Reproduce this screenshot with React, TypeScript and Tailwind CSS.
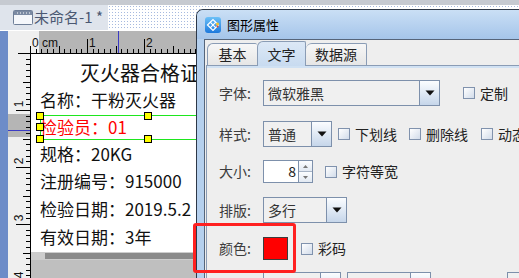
import React from "react";

const FONT = "font-['Noto_Sans_CJK_SC','Noto_Sans',sans-serif]";

const TopRuler = () => {
  const ticks = [];
  for (let i = 0; i <= 30; i++) {
    const x = Math.round(22 + i * 5.7) + 0.5;
    const len = i === 0 ? 7 : i % 10 === 0 ? 14 : i % 5 === 0 ? 7 : 4;
    ticks.push(<line key={i} x1={x} x2={x} y1={22 - len} y2={22} stroke="#000" strokeWidth={1} />);
  }
  return (
    <svg width="200" height="23" className="block">
      <rect x="0" y="0" width="31" height="23" fill="#efefef" />
      <rect x="31" y="0" width="169" height="22" fill="#b5b5b5" />
      <line x1="10" x2="200" y1="22.5" y2="22.5" stroke="#000" />
      {ticks}
      <line x1="110.5" x2="110.5" y1="0" y2="22" stroke="#3b3bc4" />
      <g fontFamily="'Liberation Sans', sans-serif" fontSize="12" fill="#111">
        <text x="24" y="16">0 cm</text>
        <text x="81" y="16">1</text>
        <text x="138" y="16">2</text>
      </g>
    </svg>
  );
};

const LeftRuler = () => {
  const ticks = [];
  for (let i = 0; i <= 40; i++) {
    const y = Math.round(-1 + i * 5.7) + 0.5;
    const len = i % 10 === 0 ? 14 : i % 5 === 0 ? 7 : 4;
    ticks.push(<line key={i} x1={22 - len} x2={22} y1={y} y2={y} stroke="#000" strokeWidth={1} />);
  }
  const labels = [
    { t: "1", y: 47 },
    { t: "2", y: 104 },
    { t: "3", y: 161 },
    { t: "4", y: 218 },
  ];
  return (
    <svg width="22" height="224" className="block shrink-0">
      <rect x="0" y="0" width="22" height="224" fill="#efefef" />
      <rect x="0" y="60" width="22" height="23" fill="#b5b5b5" />
      <line x1="0" x2="22" y1="76.5" y2="76.5" stroke="#3b3bc4" />
      {ticks}
      <g fontFamily="'Liberation Sans', sans-serif" fontSize="12" fill="#111">
        {labels.map((l) => (
          <text key={l.t} x="0" y="0" transform={`translate(15 ${l.y + 3}) rotate(-90)`} textAnchor="middle">
            {l.t}
          </text>
        ))}
      </g>
    </svg>
  );
};

const WindowIcon = () => (
  <svg width="20" height="15" viewBox="0 0 20 15">
    <rect x="0.5" y="0.5" width="19" height="14" rx="1" fill="#f5f7fb" stroke="#6f7f98" />
    <rect x="1" y="1" width="18" height="4" fill="#7b8aa3" />
    <g fill="#fff">
      <rect x="4" y="2.5" width="1" height="1" />
      <rect x="7" y="2.5" width="1" height="1" />
      <rect x="10" y="2.5" width="1" height="1" />
      <rect x="13" y="2.5" width="1" height="1" />
      <rect x="16" y="2.5" width="1" height="1" />
    </g>
  </svg>
);

const DialogIcon = () => (
  <svg width="16" height="16" viewBox="0 0 16 16">
    <defs>
      <linearGradient id="dg" x1="0" y1="0" x2="0" y2="1">
        <stop offset="0" stopColor="#6cc0f7" />
        <stop offset="1" stopColor="#1c78dc" />
      </linearGradient>
    </defs>
    <rect width="16" height="16" rx="3" fill="url(#dg)" />
    <g stroke="#fff" strokeWidth="1.2" fill="none">
      <path d="M2.5 8 L8 2.5 L13.5 8 L8 13.5 Z" />
      <path d="M5.2 5.2 L10.8 10.8 M10.8 5.2 L5.2 10.8" />
    </g>
    <circle cx="12.5" cy="7" r="1.6" fill="#f2c230" />
    <circle cx="12.5" cy="9.5" r="1" fill="#e2463a" />
  </svg>
);

const Arrow = () => (
  <svg width="10" height="6" viewBox="0 0 10 6">
    <polygon points="0.5,0.5 9.5,0.5 5,5.5" fill="#111" />
  </svg>
);

const Combo = ({ text, width }: { text: string; width: string }) => (
  <div className={`flex h-[26px] border border-[#7d90ab] bg-[#f0f0f0] ${width}`}>
    <span className="flex-1 flex items-center pl-[4px] text-[14px] text-[#333]">{text}</span>
    <span className="w-[20px] border-l border-[#7d90ab] bg-gradient-to-b from-[#fbfdff] to-[#c6d6ea] flex items-center justify-center">
      <Arrow />
    </span>
  </div>
);

const Check = ({ label }: { label: string }) => (
  <div className="flex items-center gap-[5px] shrink-0">
    <span className="w-[12px] h-[12px] border border-[#8092ad] bg-gradient-to-br from-white to-[#d2dcea]" />
    <span className="text-[14px] text-[#222] whitespace-nowrap">{label}</span>
  </div>
);

const Label = ({ text }: { text: string }) => (
  <span className="w-[44px] shrink-0 text-[14px] text-[#3c3c3c]">{text}</span>
);

const canvasRows = [
  { text: "名称：干粉灭火器", h: "h-[27px]" },
  { text: "检验员：01", h: "h-[27px]", selected: true },
  { text: "规格：20KG", h: "h-[27px]" },
  { text: "注册编号：915000", h: "h-[28px]" },
  { text: "检验日期：2019.5.2", h: "h-[28px]" },
  { text: "有效日期：3年", h: "h-[27px]" },
];

const Handle = ({ cls }: { cls: string }) => (
  <span className={`absolute w-[8px] h-[8px] bg-[#ffff00] border border-black ${cls}`} />
);

export default function App() {
  return (
    <div className={`relative w-[519px] h-[278px] overflow-hidden bg-[#bfbfbf] ${FONT}`}>
      {/* editor window */}
      <div className="flex flex-col h-full">
        <div className="h-[5px] bg-[#c6cad1]" />
        <div className="h-[25px] flex items-center bg-[#dfe4ec]">
          <span className="ml-[13px] mr-[1px] flex">
            <WindowIcon />
          </span>
          <span className="text-[15px] text-[#4b5872] whitespace-nowrap">未命名-1 *</span>
          <div className="ml-[5px] flex-1 h-full bg-white bg-[radial-gradient(#a7badf_0.8px,transparent_1px)] bg-[length:3px_3px]" />
        </div>
        <div className="h-[1px] bg-white" />
        <div className="flex flex-1">
          <div className="w-[8px] bg-[#6d8cc8]" />
          <div className="flex flex-col flex-1">
            <TopRuler />
            <div className="flex flex-1">
              <LeftRuler />
              <div className="flex flex-col flex-1">
                <div className="relative h-[198px] bg-white border-l border-black pl-[9px]">
                  <div className="mt-[5px] h-[27px] flex items-center pl-[40px] text-[20px] text-[#111] whitespace-nowrap">
                    灭火器合格证
                  </div>
                  {canvasRows.map((r) => (
                    <div
                      key={r.text}
                      className={`${r.h} flex items-center text-[17px] whitespace-nowrap ${
                        r.selected ? "text-[#ff0000]" : "text-[#111]"
                      }`}
                    >
                      {r.text}
                    </div>
                  ))}
                  {/* selection */}
                  <span className="absolute left-[13px] right-0 top-[61px] h-[1px] bg-[#1ee61e]" />
                  <span className="absolute left-[13px] right-0 top-[85px] h-[1px] bg-[#1ee61e]" />
                  <span className="absolute left-[9px] top-[65px] w-[1px] h-[17px] bg-[#1ee61e]" />
                  <Handle cls="left-[5px] top-[58px]" />
                  <Handle cls="left-[5px] top-[69px]" />
                  <Handle cls="left-[5px] top-[81px]" />
                  <Handle cls="left-[113px] top-[58px]" />
                  <Handle cls="left-[113px] top-[81px]" />
                </div>
                <div className="h-[8px] bg-[#cdcdcd] border-l border-black pl-[14px] pt-[1px]">
                  <div className="h-[6px] bg-[#8a8a8a]" />
                </div>
                <div className="flex-1 border-l border-black bg-[#bfbfbf]" />
              </div>
            </div>
          </div>
        </div>
      </div>

      {/* dialog */}
      <div className="absolute left-[196px] top-[9px] w-[330px] h-[275px] rounded-tl-[7px] border-l border-t border-[#2d3848] bg-[#b5d0ee] overflow-hidden">
        <div className="h-[29px] flex items-center pl-[8px] gap-[6px] bg-gradient-to-b from-[#cadff5] to-[#a5c5ea]">
          <DialogIcon />
          <span className="text-[13px] text-black">图形属性</span>
        </div>
        <div className="ml-[7px] h-full bg-[#eeeeee] border-l border-t border-[#56657a] pl-[1px] pt-[1px]">
          <div className="flex items-end h-[24px] pl-[1px]">
            <div className="w-[50px] h-[22px] flex items-center justify-center rounded-tl-[6px] rounded-tr-[2px] border-t border-l border-[#8a9cb5] bg-gradient-to-b from-[#f7f7f7] to-[#e6e6e6] text-[14px] text-[#222]">
              基本
            </div>
            <div className="relative z-10 -mb-[1px] w-[49px] h-[25px] flex items-center justify-center rounded-tl-[6px] rounded-tr-[2px] border-t border-l border-r border-[#8a9cb5] bg-gradient-to-b from-[#dce8f6] to-[#c8dbf0] text-[14px] text-[#222]">
              文字
            </div>
            <div className="w-[61px] h-[22px] flex items-center justify-center rounded-tl-[6px] rounded-tr-[2px] border-t border-r border-[#8a9cb5] bg-gradient-to-b from-[#f7f7f7] to-[#e6e6e6] text-[14px] text-[#222]">
              数据源
            </div>
          </div>
          <div className="h-full border-t border-l border-[#8a9cb5] bg-[#eeeeee]">
            <div className="h-[2px] bg-[#d0e1f3]" />
            <div className="flex flex-col pl-[12px]">
              <div className="mt-[12px] h-[26px] flex items-center">
                <Label text="字体:" />
                <Combo text="微软雅黑" width="w-[177px]" />
                <div className="ml-[23px]">
                  <Check label="定制" />
                </div>
              </div>
              <div className="mt-[15px] h-[26px] flex items-center">
                <Label text="样式:" />
                <Combo text="普通" width="w-[70px]" />
                <div className="ml-[6px] flex items-center">
                  <Check label="下划线" />
                  <div className="ml-[12px]">
                    <Check label="删除线" />
                  </div>
                  <div className="ml-[13px]">
                    <Check label="动态" />
                  </div>
                </div>
              </div>
              <div className="mt-[13px] h-[23px] flex items-center">
                <Label text="大小:" />
                <div className="flex w-[50px] h-[23px] border border-[#7d90ab]">
                  <span className="w-[34px] bg-white flex items-center justify-end pr-[2px] text-[14px] text-[#222]">
                    8
                  </span>
                  <span className="flex-1 flex flex-col border-l border-[#7d90ab]">
                    <span className="flex-1 flex items-center justify-center bg-gradient-to-b from-[#fbfdff] to-[#e2e9f2] border-b border-[#a7b4c6]">
                      <svg width="5" height="3" viewBox="0 0 5 3"><polygon points="0,3 5,3 2.5,0" fill="#777" /></svg>
                    </span>
                    <span className="flex-1 flex items-center justify-center bg-gradient-to-b from-[#fbfdff] to-[#e2e9f2]">
                      <svg width="5" height="3" viewBox="0 0 5 3"><polygon points="0,0 5,0 2.5,3" fill="#777" /></svg>
                    </span>
                  </span>
                </div>
                <div className="ml-[12px]">
                  <Check label="字符等宽" />
                </div>
              </div>
              <div className="mt-[14px] h-[26px] flex items-center">
                <Label text="排版:" />
                <Combo text="多行" width="w-[84px]" />
              </div>
              <div className="mt-[14px] h-[23px] flex items-center">
                <Label text="颜色:" />
                <span className="w-[25px] h-[23px] bg-[#ff0000] border border-[#3c3c3c]" />
                <div className="ml-[13px]">
                  <Check label="彩码" />
                </div>
              </div>
              <div className="mt-[12px] h-[26px] flex items-start pl-[44px]">
                <Combo text="" width="w-[84px]" />
                <div className="ml-[6px]">
                  <Combo text="" width="w-[84px]" />
                </div>
                <div className="ml-[76px] w-[20px] h-[26px] border border-[#7d90ab] bg-[#f0f0f0]" />
              </div>
            </div>
          </div>
        </div>
      </div>

      {/* highlight */}
      <div className="absolute left-[193px] top-[223px] w-[103px] h-[50px] border-[3px] border-[#ff2020] rounded-[3px]" />
    </div>
  );
}
